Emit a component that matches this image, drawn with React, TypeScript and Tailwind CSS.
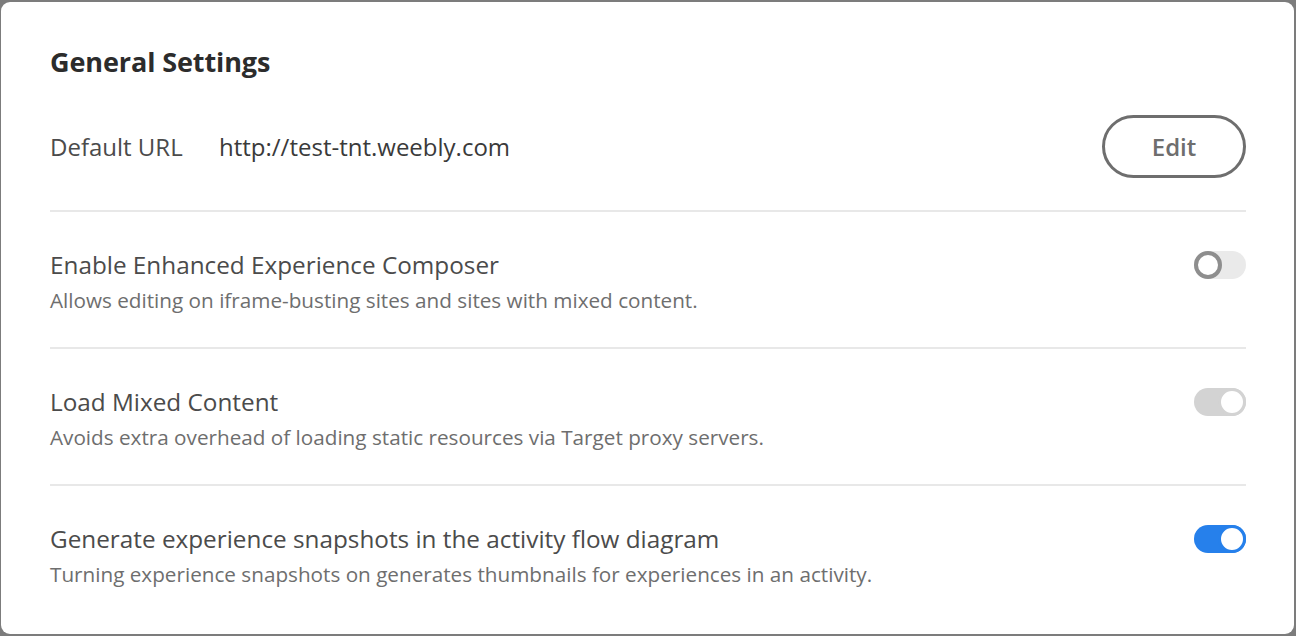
import { useState } from "react";

type Row = {
  title: string;
  desc: string;
  state: "off" | "muted" | "on";
};

const ROWS: Row[] = [
  {
    title: "Enable Enhanced Experience Composer",
    desc: "Allows editing on iframe-busting sites and sites with mixed content.",
    state: "off",
  },
  {
    title: "Load Mixed Content",
    desc: "Avoids extra overhead of loading static resources via Target proxy servers.",
    state: "muted",
  },
  {
    title: "Generate experience snapshots in the activity flow diagram",
    desc: "Turning experience snapshots on generates thumbnails for experiences in an activity.",
    state: "on",
  },
];

export default function App() {
  const [url] = useState("http://test-tnt.weebly.com");

  return (
    <div
      className="h-[636px] w-[1296px] bg-[#7c7c7c] pt-[2px] pl-[1px] pr-[2px] pb-[2px]"
      style={{ fontFamily: '"Open Sans", "Liberation Sans", sans-serif' }}
    >
      <div className="h-full w-full rounded-[9px] bg-white pl-[49px] pr-[48px]">
        <h1 className="pt-[42px] text-[27px] font-bold leading-[36px] text-[#2c2c2c] tracking-[-0.1px]">
          General Settings
        </h1>

        {/* Default URL */}
        <div className="mt-[35px] mb-[32px] flex h-[63px] items-center justify-between">
          <div className="flex items-center text-[24px] text-[#4b4b4b]">
            <span className="w-[169px]">Default URL</span>
            <span className="text-[#3a3a3a]">{url}</span>
          </div>
          <button className="h-[63px] w-[144px] rounded-full border-[3px] border-[#6e6e6e] text-[24px] font-semibold text-[#6e6e6e]">
            Edit
          </button>
        </div>

        {ROWS.map((row) => (
          <div key={row.title}>
            <div className="h-[2px] bg-[#e8e8e8]" />
            <div className="flex items-start justify-between pt-[36px] pb-[33px]">
              <div>
                <div className="text-[24.3px] leading-[34px] text-[#4b4b4b]">{row.title}</div>
                <div className="mt-[4px] text-[20.7px] leading-[28px] text-[#6e6e6e]">{row.desc}</div>
              </div>
              <Switch state={row.state} />
            </div>
          </div>
        ))}
      </div>
    </div>
  );
}

function Switch({ state }: { state: "off" | "muted" | "on" }) {
  if (state === "off") {
    return (
      <div className="mt-[3px] flex h-[28px] w-[52px] rounded-full bg-[#eaeaea]">
        <span className="h-[28px] w-[28px] rounded-full border-[4px] border-[#8e8e8e] bg-white" />
      </div>
    );
  }
  const track = state === "on" ? "bg-[#2680eb]" : "bg-[#d3d3d3]";
  const ring = state === "on" ? "border-[#2680eb]" : "border-[#d3d3d3]";
  return (
    <div className={`mt-[3px] flex h-[28px] w-[52px] justify-end rounded-full ${track}`}>
      <span className={`h-[28px] w-[28px] rounded-full border-[3px] bg-white ${ring}`} />
    </div>
  );
}
